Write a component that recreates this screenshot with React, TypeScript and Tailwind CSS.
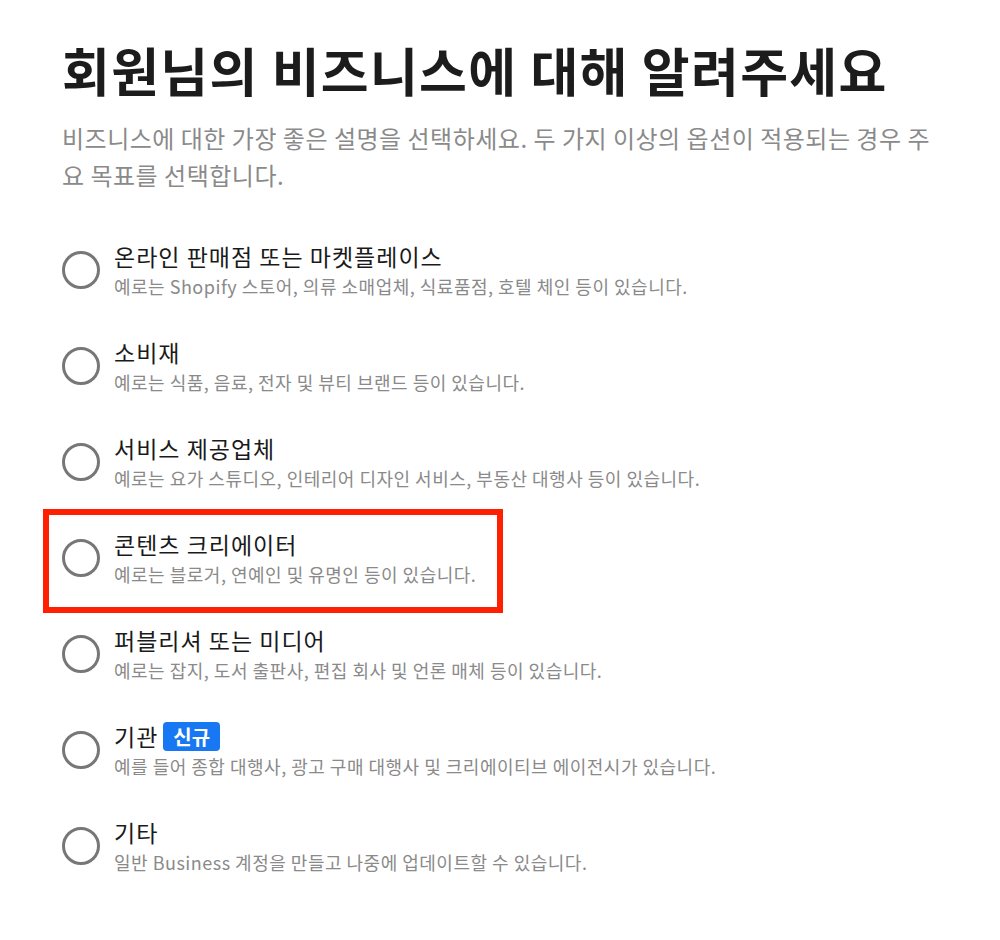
import React from 'react'

interface Option {
  title: string;
  desc: string;
  badge?: string;
  highlighted?: boolean;
}

const options: Option[] = [
  { title: '온라인 판매점 또는 마켓플레이스', desc: '예로는 Shopify 스토어, 의류 소매업체, 식료품점, 호텔 체인 등이 있습니다.' },
  { title: '소비재', desc: '예로는 식품, 음료, 전자 및 뷰티 브랜드 등이 있습니다.' },
  { title: '서비스 제공업체', desc: '예로는 요가 스튜디오, 인테리어 디자인 서비스, 부동산 대행사 등이 있습니다.' },
  { title: '콘텐츠 크리에이터', desc: '예로는 블로거, 연예인 및 유명인 등이 있습니다.', highlighted: true },
  { title: '퍼블리셔 또는 미디어', desc: '예로는 잡지, 도서 출판사, 편집 회사 및 언론 매체 등이 있습니다.' },
  { title: '기관', desc: '예를 들어 종합 대행사, 광고 구매 대행사 및 크리에이티브 에이전시가 있습니다.', badge: '신규' },
  { title: '기타', desc: '일반 Business 계정을 만들고 나중에 업데이트할 수 있습니다.' },
]

const OptionRow = ({ option }: { option: Option }) => (
  <div className="relative flex items-center gap-[14px]">
    {option.highlighted && (
      <div className="absolute left-[-19px] top-[-19px] w-[460px] h-[104px] border-[6px] border-[#fe2000] pointer-events-none" />
    )}
    <div className="w-[38px] h-[38px] shrink-0 rounded-full border-[3px] border-[#777777]" />
    <div className="flex flex-col">
      <div className="flex items-center gap-[5px]">
        <span className="text-[23px] leading-[32px] tracking-[1px] text-[#1a1a1a]">{option.title}</span>
        {option.badge && (
          <span className="rounded-[4px] bg-[#1877f2] px-[10px] text-[20px] leading-[29px] font-bold text-white">
            {option.badge}
          </span>
        )}
      </div>
      <span className="text-[18px] leading-[28px] tracking-[0.5px] text-[#8a8a8a]">{option.desc}</span>
    </div>
  </div>
)

export default function App() {
  return (
    <div
      className="min-h-[940px] bg-white pl-[62px] pr-[58px] pt-[38px]"
      style={{ fontFamily: '"Noto Sans CJK KR", "Noto Sans", sans-serif' }}
    >
      <h1 className="text-[52px] leading-[64px] tracking-[1.3px] font-bold text-[#1c1c1c]">회원님의 비즈니스에 대해 알려주세요</h1>
      <p className="mt-[17px] text-[24px] leading-[37px] tracking-[0.5px] text-[#8a8a8a]">
        비즈니스에 대한 가장 좋은 설명을 선택하세요. 두 가지 이상의 옵션이 적용되는 경우 주요 목표를 선택합니다.
      </p>
      <div className="mt-[47px] flex flex-col gap-[36px]">
        {options.map((o) => (
          <OptionRow key={o.title} option={o} />
        ))}
      </div>
    </div>
  )
}
